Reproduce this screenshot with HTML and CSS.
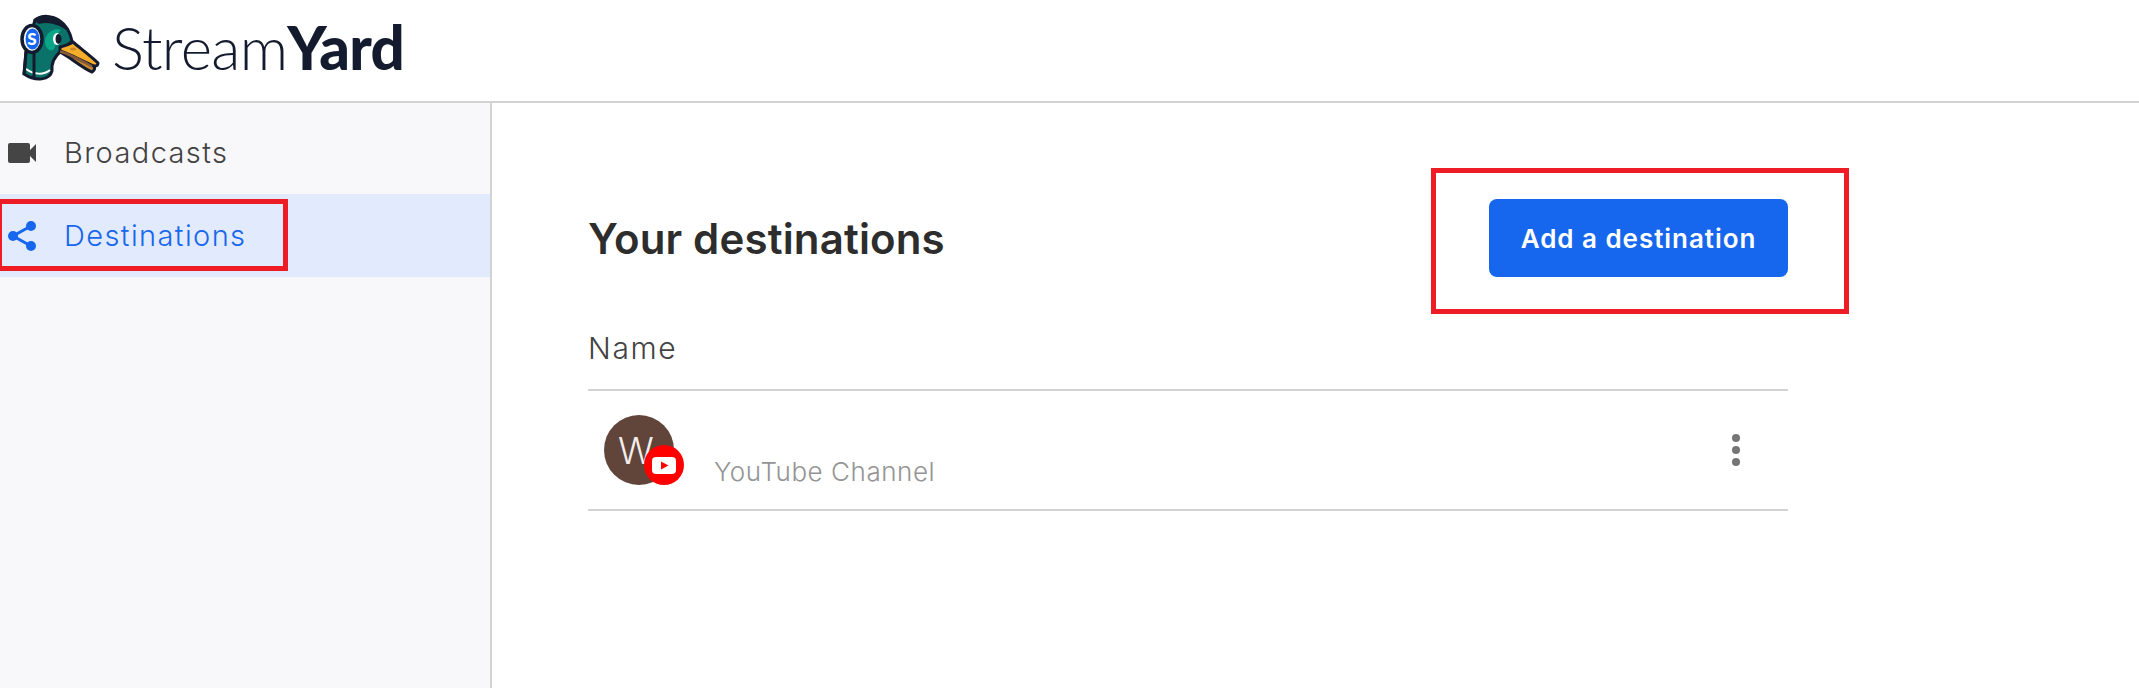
FILE: index.html
```html
<!DOCTYPE html>
<html lang="en">
<head>
<meta charset="utf-8">
<title>StreamYard destinations</title>
<link rel="stylesheet" href="styles.css">
</head>
<body>
<header class="topbar">
  <svg class="duck" viewBox="0 0 100 80" aria-hidden="true">
    <path class="duck-body" d="M26 48 L24 70 C36 78 50 76 52 67 C51 58 55 52 61 47 L72 37 C70 28 66 21 60 17 C52 11 42 11 35 16 Z"/>
    <path class="duck-hair" d="M33 16 C40 9 53 10 61 17 C65 20 68 25 70 29 C62 22 50 17 39 20 Z"/>
    <path class="duck-cheek" d="M45 36 C46 29 54 23 61 26 C54 31 58 42 53 46 C49 48 44 42 45 36 Z"/>
    <ellipse class="duck-eye-white" cx="57" cy="35" rx="4" ry="6"/>
    <ellipse class="duck-eye" cx="58.5" cy="35" rx="3" ry="5"/>
    <path class="duck-bill-low" d="M60 48 C70 53 82 64 92 68 C95 66 95 64 94 62 L62 44 Z"/>
    <path class="duck-bill" d="M60 43 C64 42 70 40 73 38 C80 44 92 53 98 59 C98 62 96 62 94 62 C84 58 70 50 60 47 Z"/>
    <path class="duck-stripe" d="M60 47.5 C70 50 84 58 92 62.5"/>
    <ellipse class="duck-spot" cx="73" cy="45" rx="3" ry="1.5"/>
    <path class="duck-collar" d="M26 65 C34 71 44 71 50 66"/>
    <path class="duck-wire" d="M26 47 L24 71 M34 47 L34 74"/>
    <ellipse class="duck-phone" cx="32" cy="35" rx="10" ry="13.5"/>
    <ellipse class="duck-phone-face" cx="32.5" cy="35" rx="7" ry="10.5"/>
    <text class="duck-s" x="32" y="41" text-anchor="middle">S</text>
  </svg>
  <div class="wordmark"><span class="wm-light">Stream</span><span class="wm-bold">Yard</span></div>
</header>
<div class="layout">
  <nav class="sidebar">
    <a class="nav-item">
      <svg class="nav-icon" viewBox="0 0 28 20" aria-hidden="true"><path d="M2 0h18a2 2 0 0 1 2 2v5l6-6v18l-6-6v5a2 2 0 0 1-2 2H2a2 2 0 0 1-2-2V2a2 2 0 0 1 2-2z"/></svg>
      <span>Broadcasts</span>
    </a>
    <a class="nav-item is-active">
      <svg class="nav-icon share" viewBox="0 0 28 30" aria-hidden="true">
        <path class="share-line" d="M23 5 L5 15 L23 25"/>
        <circle cx="23" cy="5" r="5"/><circle cx="5" cy="15" r="5"/><circle cx="23" cy="25" r="5"/>
      </svg>
      <span>Destinations</span>
    </a>
    <span class="mark mark-nav"></span>
  </nav>
  <main class="content">
    <div class="title-row">
      <h1 class="title">Your destinations</h1>
      <button class="add-btn" type="button">Add a destination</button>
    </div>
    <div class="table-head">Name</div>
    <div class="dest-row">
      <div class="avatar">W
        <span class="badge">
          <svg viewBox="0 0 24 17" aria-hidden="true"><rect width="24" height="17" rx="4" fill="#fff"/><path d="M9 4.5 L16.5 8.5 L9 12.5 Z" fill="#f00"/></svg>
        </span>
      </div>
      <div class="dest-type">YouTube Channel</div>
      <div class="kebab"><i></i><i></i><i></i></div>
    </div>
    <span class="mark mark-btn"></span>
  </main>
</div>
</body>
</html>
```
FILE: styles.css
```css
* { box-sizing: border-box; }
html, body { margin: 0; height: 100%; }
body { background: #fff; font-family: Inter, "Liberation Sans", sans-serif; overflow: hidden; }

.topbar { height: 103px; border-bottom: 2px solid #d3d3d3; display: flex; align-items: flex-start; }
.duck { width: 100px; height: 80px; flex: none; margin-top: 4px; }
.duck-body { fill: #0a7268; stroke: #141b2e; stroke-width: 3; stroke-linejoin: round; }
.duck-hair { fill: #141b2e; }
.duck-cheek { fill: #0aa586; }
.duck-eye-white { fill: #fff; }
.duck-eye { fill: #141b2e; }
.duck-bill { fill: #f5ad2a; stroke: #141b2e; stroke-width: 3; stroke-linejoin: round; }
.duck-bill-low { fill: #c98a2b; stroke: #141b2e; stroke-width: 3; stroke-linejoin: round; }
.duck-stripe { fill: none; stroke: #8a5a3c; stroke-width: 2.5; }
.duck-spot { fill: #c98a2b; }
.duck-collar { fill: none; stroke: #fff; stroke-width: 2; }
.duck-wire { fill: none; stroke: #141b2e; stroke-width: 3; }
.duck-phone { fill: #fff; stroke: #141b2e; stroke-width: 3.5; }
.duck-phone-face { fill: #1767ee; }
.duck-s { font: 900 17px Lato, sans-serif; fill: #fff; }

.wordmark { margin: 11px 0 0 12px; font-family: Lato, sans-serif; font-size: 60px; line-height: 72px; color: #141b2e; letter-spacing: -0.7px; }
.wm-light { font-weight: 300; }
.wm-bold { font-weight: 900; }

.layout { display: flex; height: 585px; }
.sidebar { position: relative; width: 492px; flex: none; background: #f8f8fb; border-right: 2px solid #d3d3d3; padding-top: 8px; }
.nav-item { display: flex; align-items: center; height: 83px; padding-left: 8px; gap: 28px; font-size: 29px; font-weight: 350; letter-spacing: 1.4px; color: #424242; }
.nav-item.is-active { background: #e2ebfd; color: #1767ee; }
.nav-icon { width: 28px; height: 20px; fill: #454545; flex: none; }
.share { height: 30px; fill: #1767ee; }
.share-line { fill: none; stroke: #1767ee; stroke-width: 3; }

.mark { position: absolute; border: 5px solid #ee1c25; pointer-events: none; }
.mark-nav { left: -3px; top: 96px; width: 291px; height: 72px; }
.mark-btn { left: 939px; top: 65px; width: 418px; height: 146px; }

.content { position: relative; flex: 1; padding: 96px 0 0 96px; }
.title-row { width: 1200px; display: flex; justify-content: space-between; align-items: center; }
.title { margin: 0; font-size: 42px; font-weight: 600; letter-spacing: 0.15px; color: #2d2d2d; }
.add-btn { width: 299px; height: 78px; border: 0; border-radius: 8px; background: #1767ee; color: #fff; font: 600 26px Inter, sans-serif; letter-spacing: 0.95px; }
.table-head { width: 1200px; height: 114px; border-bottom: 2px solid #d3d3d3; padding-top: 53px; font-size: 30px; font-weight: 350; letter-spacing: 1.6px; line-height: 36px; color: #424242; }
.dest-row { width: 1200px; height: 120px; border-bottom: 2px solid #d3d3d3; display: flex; align-items: center; padding-left: 16px; }
.avatar { position: relative; width: 70px; height: 70px; border-radius: 50%; background: #61443a; color: #f2eeec; font-size: 37px; font-weight: 300; display: flex; align-items: center; justify-content: center; padding-right: 6px; flex: none; }
.badge { position: absolute; left: 40px; top: 30px; width: 40px; height: 40px; border-radius: 50%; background: #f00; display: flex; align-items: center; justify-content: center; }
.badge svg { width: 24px; height: 17px; }
.dest-type { margin: 43px 0 0 40px; font-size: 26px; font-weight: 350; letter-spacing: 0.55px; line-height: 34px; color: #949494; }
.kebab { margin-left: auto; margin-right: 48px; display: flex; flex-direction: column; gap: 4px; }
.kebab i { width: 8px; height: 8px; border-radius: 50%; background: #757575; }
```
